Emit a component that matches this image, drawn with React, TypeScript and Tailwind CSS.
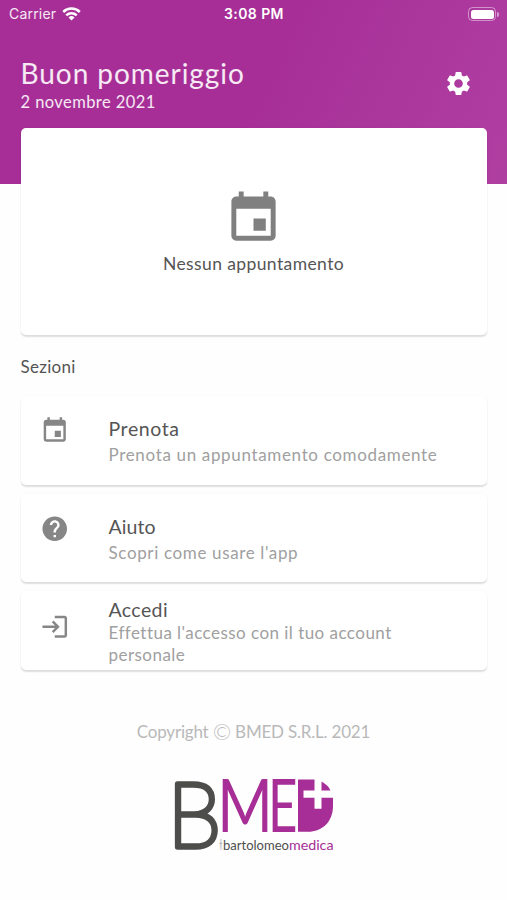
import type { ReactNode } from "react";
import { MdEvent, MdHelp, MdLogin, MdSettings } from "react-icons/md";

function StatusBar() {
  return (
    <div className="grid h-7 grid-cols-3 items-center pl-[9px] pr-2 font-['Inter',sans-serif] text-[14px] leading-7 text-white/90">
      <div className="flex items-center gap-[6px]">
        <span className="tracking-[0.2px]">Carrier</span>
        <svg width="19" height="14" viewBox="0 0 19 14" fill="none" stroke="white" strokeWidth="2.5">
          <path d="M1.2 5a11.8 11.8 0 0 1 16.6 0M4.3 8.3a7.4 7.4 0 0 1 10.4 0" />
          <path d="M6.5 10.5a4.4 4.4 0 0 1 6 0l-3 3z" fill="white" stroke="none" />
        </svg>
      </div>
      <span className="text-center font-semibold tracking-[0.4px] text-white">3:08 PM</span>
      <div className="flex items-center justify-end gap-px">
        <div className="h-[14px] w-7 rounded-[4.5px] border border-white/45 p-[1.5px]">
          <div className="h-full rounded-[2.5px] bg-white" />
        </div>
        <div className="h-[5px] w-[1.5px] rounded-r bg-white/50" />
      </div>
    </div>
  );
}

interface SectionProps {
  icon: ReactNode;
  height: string;
  children: ReactNode;
}

function Section({ icon, height, children }: SectionProps) {
  return (
    <div className={`flex items-start rounded-[5px] bg-white pl-[19.5px] shadow-[0_2px_1.5px_rgba(0,0,0,0.12),0_0_3px_rgba(0,0,0,0.03)] ${height}`}>
      <div className="mt-5 w-[68.5px] shrink-0 text-[29.5px] text-[#868686]">{icon}</div>
      <div className="whitespace-nowrap">{children}</div>
    </div>
  );
}

function Logo() {
  return (
    <svg className="mx-auto block overflow-visible" width="170" height="80" viewBox="170 775 170 80" fill="#a62e96">
      <g fontFamily="Lato, sans-serif">
        <text transform="translate(168.5 846.5) scale(0.95 1)" fontSize="91" fontWeight="100" fill="#4d4d4b" stroke="#4d4d4b" strokeWidth="5.6" strokeLinejoin="round">B</text>
        <text transform="translate(218.3 831.7) scale(0.82 1)" fontSize="73" fontWeight="400">M</text>
        <text transform="translate(269 831.7) scale(0.7 1)" fontSize="73" fontWeight="400">E</text>
      </g>
      <path d="M299 779.5H315.5V790.5H304.5V797.7H315.5V808.7H322.5V797.7H334V806C334 822 323 831.8 309 831.8H299Z" />
      <path d="M322.5 781.5Q329 785 331.5 790.5H322.5Z" />
      <text x="224" y="849.5" fontFamily="Lato, sans-serif" fontSize="12.5" fontWeight="400" fill="#4f4f4d" textLength="66" lengthAdjust="spacingAndGlyphs">bartolomeo</text>
      <text x="290" y="849.5" fontFamily="Lato, sans-serif" fontSize="12.5" fontWeight="400" textLength="44.5" lengthAdjust="spacingAndGlyphs">medica</text>
      <text transform="translate(223.3 849.5) rotate(-90)" fontFamily="Lato, sans-serif" fontSize="3.6" fill="#777">centro</text>
    </svg>
  );
}

export default function App() {
  return (
    <div className="h-[900px] w-[507px] overflow-hidden bg-[#fefefe] font-['Lato',sans-serif] text-[#555]">
      <header className="h-[184px] bg-linear-115 from-[#a62e96] from-50% to-[#b03fa2]">
        <StatusBar />
        <div className="flex justify-between pl-[20.5px] pr-[34.5px] pt-[28px] text-white/90">
          <div className="whitespace-nowrap">
            <h1 className="text-[28px] font-normal leading-[34px] tracking-[0.95px]">Buon pomeriggio</h1>
            <p className="mt-px text-[16.5px] font-normal leading-[22px] tracking-[0.42px]">2 novembre 2021</p>
          </div>
          <MdSettings className="mt-[13px] text-[29px] text-white" />
        </div>
      </header>
      <main className="px-[20.5px]">
        <div className="-mt-14 flex h-[207px] flex-col items-center rounded-[5px] bg-white pt-[61px] shadow-[0_2px_1.5px_rgba(0,0,0,0.12),0_0_3px_rgba(0,0,0,0.03)]">
          <MdEvent className="text-[59px] text-[#808080]" />
          <p className="mt-[4px] whitespace-nowrap text-[17.5px] leading-6 tracking-[0.4px]">Nessun appuntamento</p>
        </div>
        <h2 className="mt-[20px] text-[17px] leading-6 tracking-[0.3px]">Sezioni</h2>
        <div className="mt-[17px] flex flex-col gap-[9px]">
          <Section icon={<MdEvent />} height="h-[89px]">
            <h3 className="mt-[21px] text-[19.5px] leading-6 tracking-[0.6px]">Prenota</h3>
            <p className="mt-px text-[17px] leading-[25px] tracking-[0.66px] text-[#a0a0a0]">Prenota un appuntamento comodamente</p>
          </Section>
          <Section icon={<MdHelp />} height="h-[88px]">
            <h3 className="mt-[21px] text-[19.5px] leading-6 tracking-[0.1px]">Aiuto</h3>
            <p className="mt-px text-[17px] leading-[25px] tracking-[0.64px] text-[#a0a0a0]">Scopri come usare l'app</p>
          </Section>
          <Section icon={<MdLogin className="mt-px" />} height="h-[79px]">
            <h3 className="mt-[7px] text-[19.5px] leading-6 tracking-[0.4px]">Accedi</h3>
            <p className="text-[17px] leading-[22px] tracking-[0.46px] text-[#a0a0a0]">Effettua l'accesso con il tuo account<br />personale</p>
          </Section>
        </div>
      </main>
      <footer className="pt-[50px] text-center">
        <p className="h-6 whitespace-nowrap text-[17px] leading-6 tracking-[-0.2px] text-[#b9b9b9]">Copyright <span className="inline-block align-[-2px] font-['Lato',sans-serif] text-[22px] font-light leading-5">©</span> BMED S.R.L. 2021</p>
        <div className="pt-[31px]"><Logo /></div>
      </footer>
    </div>
  );
}
